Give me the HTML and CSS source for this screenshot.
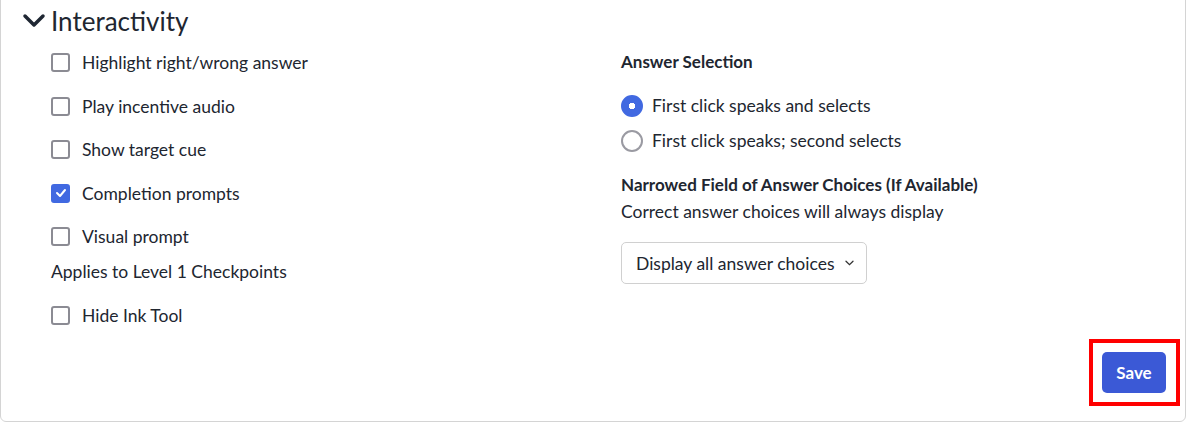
FILE: index.html
```html
<!DOCTYPE html>
<html lang="en">
<head>
  <meta charset="UTF-8">
  <title>Settings</title>
  <link rel="stylesheet" href="styles.css">
</head>
<body>
  <div class="card">
    <div class="section-head">
      <svg class="chevron" width="24" height="16" viewBox="0 0 24 16">
        <path d="M3 3 L12 12 L21 3" fill="none" stroke="#1f2733" stroke-width="3.5" stroke-linecap="round" stroke-linejoin="round"/>
      </svg>
      <h2>Interactivity</h2>
    </div>

    <div class="columns">
      <div class="col-left">
        <label class="check-row"><span class="box"></span>Highlight right/wrong answer</label>
        <label class="check-row"><span class="box"></span>Play incentive audio</label>
        <label class="check-row"><span class="box"></span>Show target cue</label>
        <label class="check-row"><span class="box checked">
          <svg width="12" height="10" viewBox="0 0 12 10"><path d="M2 5 L5 8 L10 2" fill="none" stroke="#fff" stroke-width="2" stroke-linecap="round" stroke-linejoin="round"/></svg>
        </span>Completion prompts</label>
        <label class="check-row"><span class="box"></span>Visual prompt</label>
        <p class="note">Applies to Level 1 Checkpoints</p>
        <label class="check-row"><span class="box"></span>Hide Ink Tool</label>
      </div>

      <div class="col-right">
        <h3 class="field-title">Answer Selection</h3>
        <div class="radio-group">
          <label class="radio-row"><span class="radio selected"></span>First click speaks and selects</label>
          <label class="radio-row"><span class="radio"></span>First click speaks; second selects</label>
        </div>
        <h3 class="field-title narrowed">Narrowed Field of Answer Choices (If Available)</h3>
        <p class="hint">Correct answer choices will always display</p>
        <button class="dropdown">Display all answer choices
          <svg width="9" height="6" viewBox="0 0 9 6"><path d="M1 1.2 L4.5 4.6 L8 1.2" fill="none" stroke="#333" stroke-width="1.3" stroke-linecap="round"/></svg>
        </button>
      </div>
    </div>

    <div class="actions">
      <span class="focus-ring">
        <button class="save-btn">Save</button>
      </span>
    </div>
  </div>
</body>
</html>
```

FILE: styles.css
```css
body {
  margin: 0;
  padding: 0;
  font-family: Lato, "Open Sans", sans-serif;
  color: #212630;
  background: #ffffff;
}
.card {
  width: 1186px;
  margin-top: -20px;
  height: 442px;
  box-sizing: border-box;
  border: 1px solid #d4d4d4;
  border-radius: 6px;
  display: flex;
  flex-direction: column;
}
.section-head {
  display: flex;
  align-items: center;
  height: 40px;
  padding-top: 20px;
  padding-left: 21px;
}
.chevron {
  margin-right: 5px;
}
.section-head h2 {
  margin: 0;
  font-size: 26px;
  font-weight: 400;
}
.columns {
  display: flex;
  padding-left: 50px;
}
.col-left {
  width: 570px;
  display: flex;
  flex-direction: column;
}
.check-row {
  display: flex;
  align-items: center;
  height: 43.5px;
  font-size: 17.5px;
}
.box {
  width: 15px;
  height: 15px;
  border: 2px solid #8b8b93;
  border-radius: 3px;
  margin-right: 12px;
  display: flex;
  align-items: center;
  justify-content: center;
}
.box.checked {
  background: #4169e1;
  border-color: #4169e1;
}
.note {
  margin: 0 0 9px;
  line-height: 26px;
  font-size: 17.5px;
}
.col-right {
  display: flex;
  flex-direction: column;
  align-items: flex-start;
}
.field-title {
  margin: 0;
  font-size: 17px;
  font-weight: 700;
  line-height: 22px;
  padding-top: 10px;
}
.radio-group {
  margin-top: 15px;
}
.radio-row {
  display: flex;
  align-items: center;
  height: 35px;
  font-size: 17.5px;
}
.radio {
  width: 18px;
  height: 18px;
  border: 2px solid #9a9aa2;
  border-radius: 50%;
  margin-right: 9px;
}
.radio.selected {
  border-color: #4169e1;
  background: radial-gradient(circle, #ffffff 0 3px, #4169e1 3.5px);
}
.field-title.narrowed {
  padding-top: 16px;
}
.hint {
  margin: 5px 0 0;
  font-size: 17.5px;
  line-height: 22px;
}
.dropdown {
  margin-top: 19px;
  height: 42px;
  padding: 0 12px 0 14px;
  border: 1px solid #d0d0d0;
  border-radius: 5px;
  background: #ffffff;
  font-family: inherit;
  font-size: 17.5px;
  color: #212630;
  display: flex;
  align-items: center;
  gap: 10px;
}
.actions {
  margin-top: auto;
  display: flex;
  justify-content: flex-end;
  padding: 0 5px 15px 0;
}
.focus-ring {
  display: flex;
  border: 4px solid #ff0000;
  padding: 9px 10px 9px 9px;
}
.save-btn {
  width: 64px;
  height: 41px;
  border: none;
  border-radius: 5px;
  background: #3b59d6;
  color: #ffffff;
  font-family: inherit;
  font-size: 17px;
  font-weight: 700;
}
```
